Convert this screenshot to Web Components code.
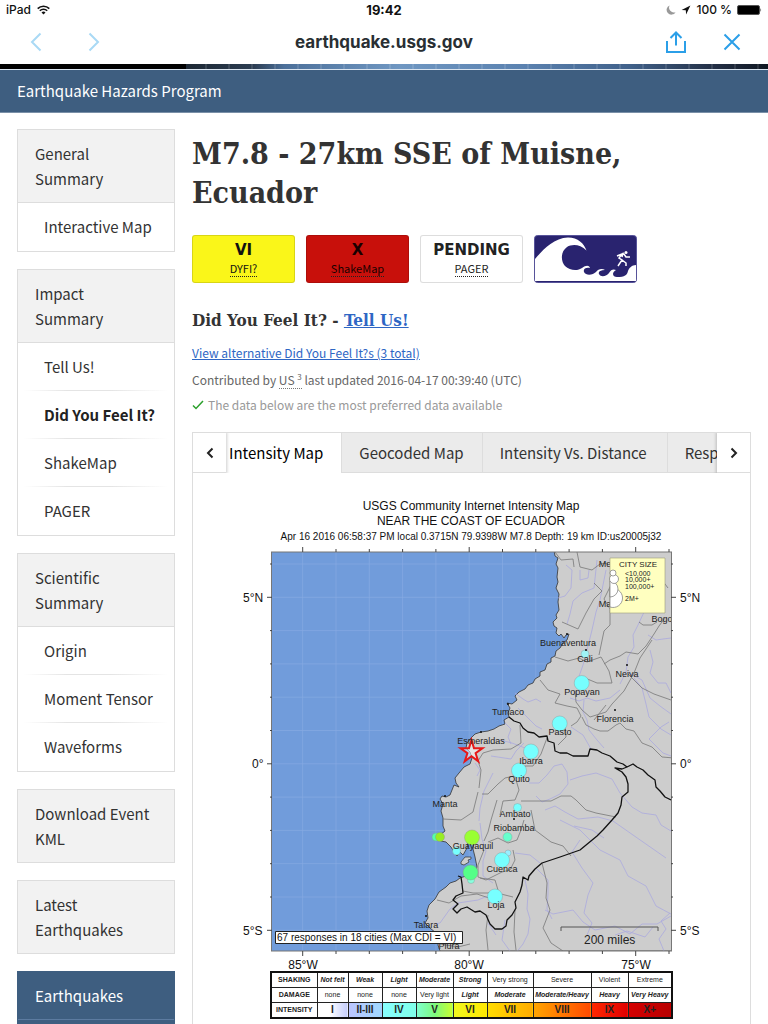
<!DOCTYPE html>
<html lang="en">
<head>
<meta charset="utf-8">
<meta name="viewport" content="width=device-width, initial-scale=1">
<title>M7.8 - 27km SSE of Muisne, Ecuador</title>
<style>
  html, body { margin: 0; height: 100%; }
  body {
    --rule: #ddd;
    --blue: #3e5e80;
    --link: #2e66c4;
    --sys: Inter, "Liberation Sans", sans-serif;
    --serif: "DejaVu Serif Condensed", "DejaVu Serif", serif;
    font-family: "Noto Sans CJK SC", "Noto Sans", sans-serif;
    color: #333;
    background: #fff;
    overflow: hidden;
  }
</style>
</head>
<body>
<app-shell>
  <status-bar slot="chrome"></status-bar>
  <browser-bar slot="chrome" address="earthquake.usgs.gov"></browser-bar>
  <site-banner>Earthquake Hazards Program</site-banner>
  <page-columns>
    <nav-group slot="side" heading="General Summary"><nav-item>Interactive Map</nav-item></nav-group>
    <nav-group slot="side" heading="Impact Summary">
      <nav-item>Tell Us!</nav-item><nav-item current>Did You Feel It?</nav-item><nav-item>ShakeMap</nav-item><nav-item>PAGER</nav-item>
    </nav-group>
    <nav-group slot="side" heading="Scientific Summary">
      <nav-item>Origin</nav-item><nav-item>Moment Tensor</nav-item><nav-item>Waveforms</nav-item>
    </nav-group>
    <nav-group slot="side" heading="Download Event KML"></nav-group>
    <nav-group slot="side" heading="Latest Earthquakes"></nav-group>
    <nav-group slot="side" heading="Earthquakes" site></nav-group>
    <event-summary></event-summary>
    <product-tabs>
      <intensity-map></intensity-map>
      <intensity-legend></intensity-legend>
    </product-tabs>
  </page-columns>
</app-shell>

<script>
const define = (name, render) => customElements.define(name, class extends HTMLElement {
  constructor() { super(); this.attachShadow({ mode: 'open' }); }
  connectedCallback() { this.shadowRoot.innerHTML = render(this); }
});

define('app-shell', () => `
  <style>
    :host { display: flex; flex-direction: column; height: 100vh; }
    .view { flex: 1; min-height: 0; overflow: auto; scrollbar-width: none; }
  </style>
  <slot name="chrome"></slot>
  <div class="view"><slot></slot></div>`);

define('status-bar', () => `
  <style>
    :host { display: grid; grid-template-columns: 1fr auto 1fr; align-items: center; height: 20px; padding: 0 6px; font: 500 12px/20px var(--sys); color: #111; }
    .l, .r { display: flex; align-items: center; gap: 6px; }
    .r { justify-content: flex-end; gap: 5px; }
    b { font-size: 13px; }
    svg { display: block; }
  </style>
  <span class="l">iPad
    <svg width="13" height="10" viewBox="0 0 13 10" fill="none" stroke="#111" stroke-width="1.6"><path d="M.7 3.6a8.2 8.2 0 0 1 11.6 0M2.8 5.8a5.2 5.2 0 0 1 7.4 0"/><path d="M6.5 9.6 4.5 7.5a2.8 2.8 0 0 1 4 0z" fill="#111" stroke="none"/></svg>
  </span>
  <b>19:42</b>
  <span class="r">
    <svg width="10" height="10" viewBox="0 0 10 10"><path d="M3.6.4a4.8 4.8 0 1 0 6 6.8A4.9 4.9 0 0 1 3.6.4z" fill="#999"/></svg>
    <svg width="10" height="10" viewBox="0 0 10 10"><path d="M9.4.6.6 5l4.2.3.3 4.2z" fill="#111"/></svg>
    <span>100 %</span>
    <svg width="25" height="10" viewBox="0 0 25 10"><rect x=".5" y=".5" width="22" height="9" rx="1.5" fill="#000" stroke="#555"/><path d="M23.5 3q1.3 2 0 4z" fill="#111"/></svg>
  </span>`);

define('browser-bar', el => `
  <style>
    :host { display: grid; grid-template-columns: 1fr auto 1fr; align-items: center; height: 44px; padding: 0 26px; }
    div { display: flex; gap: 38px; }
    .r { justify-content: flex-end; gap: 36px; }
    button { appearance: none; border: 0; background: none; padding: 0; width: 20px; height: 24px; display: grid; place-items: center; }
    strong { font: 700 17px/24px var(--sys); color: #292f33; }
    svg { fill: none; stroke: #2b9fe8; stroke-width: 2; }
    .l svg { stroke: #a9d9f5; }
  </style>
  <div class="l">
    <button aria-label="Back"><svg width="12" height="20" viewBox="0 0 12 20"><path d="M10.500 1.500 2 10l8.500 8.500"/></svg></button>
    <button aria-label="Forward"><svg width="12" height="20" viewBox="0 0 12 20"><path d="m1.500 1.500 8.500 8.500-8.500 8.500"/></svg></button>
  </div>
  <strong>${el.getAttribute('address')}</strong>
  <div class="r">
    <button aria-label="Share"><svg width="20" height="22" viewBox="0 0 20 22"><path d="M1 10v11h18V10M10 14.500V1.500M4.500 7 10 1.500 15.500 7"/></svg></button>
    <button aria-label="Close"><svg width="18" height="18" viewBox="0 0 18 18"><path d="m1.500 1.500 15 15m0-15-15 15"/></svg></button>
  </div>`);

define('site-banner', () => `
  <style>
    :host { display: block; }
    .photo { height: 5px; border-bottom: 1px solid #dbe5f0; background:
      linear-gradient(90deg, #000 0 186px, transparent 186px),
      repeating-linear-gradient(90deg, transparent 0 21px, #ffffff1c 21px 23px),
      linear-gradient(90deg, #1c2733 24%, #2c3d52 33%, #4c709a 37%, #6f97c2 52%, #5b82b0 68%, #40618a 82%, #232f45 93%, #101722); }
    a { display: block; padding: 0 17px; font-size: 15px; line-height: 42px; color: #fff; background: var(--blue); text-decoration: none; border-bottom: 1px solid #7a90a8; }
  </style>
  <div class="photo"></div>
  <a href="#program"><slot></slot></a>`);

define('page-columns', () => `
  <style>
    :host { display: grid; grid-template-columns: 158px minmax(0, 1fr); gap: 17px; padding: 16px 17px; align-items: start; }
    nav { display: grid; gap: 17px; }
  </style>
  <nav><slot name="side"></slot></nav>
  <main><slot></slot></main>`);

define('nav-group', el => `
  <style>
    :host { display: block; border: 1px solid var(--rule); font-size: 15px; line-height: 25px; }
    :host([site]) { border-color: var(--blue); background: var(--blue); min-height: 100px; }
    a { display: block; padding: 11px 22px 11px 17px; background: #f2f2f2; color: #333; text-decoration: none; }
    :host([site]) a { background: var(--blue); color: #fff; border-bottom: 1px solid #5c7ba0; }
    .items { border-top: 1px solid var(--rule); }
  </style>
  <a href="#section">${el.getAttribute('heading')}</a>
  ${el.children.length ? '<div class="items"><slot></slot></div>' : ''}`);

define('nav-item', () => `
  <style>
    :host { display: block; }
    a { display: block; padding: 11px 0 11px 26px; color: #333; text-decoration: none; white-space: nowrap; }
    :host([current]) a { font-weight: 700; color: #222; }
    i { display: block; height: 1px; margin: 0 6px; background: linear-gradient(90deg, #fff, #e4e4e4 30%, #e4e4e4 60%, #fff); }
    :host(:last-child) i { background: none; }
  </style>
  <a href="#item"><slot></slot></a><i></i>`);

define('event-badge', el => `
  <style>
    :host { display: block; }
    a { box-sizing: border-box; display: flex; flex-direction: column; align-items: center; width: 103px; height: 48px; padding-top: 4px; border: 1px solid #0002; border-radius: 3px; background: var(--fill, #fff); color: var(--ink, #222); text-decoration: none; }
    b { font: 700 15px/20px "DejaVu Sans", sans-serif; }
    abbr { font-size: 11px; line-height: 16px; border-bottom: 1px dotted #222; }
  </style>
  <a href="#badge"><b>${el.getAttribute('value')}</b><abbr>${el.getAttribute('label')}</abbr></a>`);

define('event-summary', () => `
  <style>
    :host { display: block; }
    h1 { margin: 5px 0 0; font: 700 30px/39px var(--serif); }
    .badges { display: flex; gap: 11px; margin-top: 23px; }
    .tsunami { display: block; }
    h2 { margin: 24px 0 0; font: 700 17px/26px var(--serif); }
    a { color: var(--link); }
    p { margin: 0; font-size: 12px; line-height: 25px; color: #666; }
    .alt { margin-top: 7px; }
    .by { margin-top: 2px; }
    .ok { color: #999; display: flex; align-items: center; gap: 4px; }
    abbr { border-bottom: 1px dotted #777; }
    sup { font-size: 8px; line-height: 1; }
  </style>
  <h1>M7.8 - 27km SSE of Muisne, Ecuador</h1>
  <div class="badges">
    <event-badge value="VI" label="DYFI?" style="--fill:#faf619;--ink:#111"></event-badge>
    <event-badge value="X" label="ShakeMap" style="--fill:#c8100b;--ink:#180000"></event-badge>
    <event-badge value="PENDING" label="PAGER"></event-badge>
    <a class="tsunami" href="#tsunami" aria-label="Tsunami">
      <svg width="103" height="48" viewBox="0 0 103 48" style="display:block">
        <rect x=".5" y=".5" width="102" height="47" rx="3" fill="#29236f" stroke="#57539a"/>
        <path d="M1 24C8 16 19 3 34 2.500c10 0 16 6 18.500 13C46 9 38 9 33 12c-7 5-6 15-2 19 5 5 13 5 17 2 4-3 7-3 8 0-4-1-7 1-6 4 2 4 9 3 12 0 2-3 6-4 9-2-5 0-7 2-6 4 2 4 8 2 10-1 2-4 5-4 7-3-5 3-3 7 1 7 8 0 10-2 11-6 1-3 4-6 8-6v16H1z" fill="#fff"/>
        <path d="m84 31 4-6-3-2 3-4-5 2m2-1 5-1 2 3 4 0m-8 3 4 3 0 3m-4-9 1-4" fill="none" stroke="#fff" stroke-width="1.500"/><circle cx="92" cy="17.500" r="1.500" fill="#fff"/>
      </svg>
    </a>
  </div>
  <h2>Did You Feel It? - <a href="#tell">Tell Us!</a></h2>
  <p class="alt"><a href="#alternatives">View alternative Did You Feel It?s (3 total)</a></p>
  <p class="by">Contributed by <abbr>US <sup>3</sup></abbr> last updated 2016-04-17 00:39:40 (UTC)</p>
  <p class="ok"><svg width="12" height="10" viewBox="0 0 12 10"><path d="m1 5.500 3 3L11 1" fill="none" stroke="#2ca02c" stroke-width="1.500"/></svg>The data below are the most preferred data available</p>`);

define('product-tabs', () => `
  <style>
    :host { display: block; margin-top: 15px; border: 1px solid var(--rule); }
    .bar { display: flex; height: 40px; }
    .tabs { flex: 1; min-width: 0; display: flex; overflow: hidden; }
    button { appearance: none; box-sizing: border-box; flex: none; margin: 0; border: 0; border-bottom: 1px solid var(--rule); border-left: 1px solid var(--rule); padding: 0 18px 0 17px; font: inherit; font-size: 15px; line-height: 39px; color: #333; background: #ebebeb; white-space: nowrap; }
    .tabs button:first-child { padding-left: 2px; border-color: transparent; background: #fff; color: #000; }
    .tabs button:nth-child(3) { padding-right: 20px; }
    .arrow { width: 33px; padding: 0; background: #fff; display: grid; place-items: center; border-left: 0; position: relative; box-shadow: 0 0 3px 1px #0003; clip-path: inset(0 -4px); }
    .arrow:first-child { clip-path: inset(0 -4px 0 0); }
    .arrow:last-child { clip-path: inset(0 0 0 -4px); }
    svg { fill: none; stroke: #222; stroke-width: 2; }
  </style>
  <div class="bar">
    <button class="arrow" aria-label="Previous tabs"><svg width="8" height="12" viewBox="0 0 8 12"><path d="M6.500 1.500 2 6l4.500 4.500"/></svg></button>
    <div class="tabs" role="tablist">
      <button role="tab" aria-selected="true">Intensity Map</button>
      <button role="tab">Geocoded Map</button>
      <button role="tab">Intensity Vs. Distance</button>
      <button role="tab">Responses</button>
    </div>
    <button class="arrow" aria-label="Next tabs"><svg width="8" height="12" viewBox="0 0 8 12"><path d="M1.500 1.500 6 6l-4.500 4.500"/></svg></button>
  </div>
  <slot></slot>`);

const lonTicks = Array.from({ length: 12 }, (_, i) => 302.7 + i * 33.3);
const latTicks = Array.from({ length: 12 }, (_, i) => 564 + i * 33.3);
const ticks = [
  ...lonTicks.map((x, i) => { const n = i % 5 ? 3 : 5; return `M${x} 552v-${n}M${x} 951v${n}`; }),
  ...latTicks.map((y, i) => { const n = i % 5 === 1 ? 5 : 2; return `M272 ${y}h-${n}M671 ${y}h${n}`; })
].join('');
const graticule = lonTicks.map(x => `M${x} 552V951`).join('') + latTicks.map(y => `M272 ${y}H671`).join('');
const cities = [
  ['Buenaventura', 568, 646], ['Cali', 585, 662], ['Popayan', 582, 695], ['Neiva', 627, 677], ['Florencia', 615, 722],
  ['Pasto', 560, 735], ['Tumaco', 508, 715], ['Esmeraldas', 481, 744], ['Ibarra', 531, 764], ['Quito', 519, 782],
  ['Manta', 445, 807], ['Ambato', 515, 817], ['Riobamba', 514, 831], ['Guayaquil', 473, 849], ['Cuenca', 502, 872],
  ['Loja', 496, 908], ['Talara', 426, 928], ['Piura', 449, 949], ['Me', 605, 567], ['Ma', 605, 607], ['Bogo', 662, 622]
].map(([n, x, y]) => `<text x="${x}" y="${y}">${n}</text>`).join('');
const responses = [
  [585, 654, 4, '#9ef3f5'], [581.7, 683, 7.5, '#7ff'], [559.7, 723.5, 7.5, '#7ff'], [531, 751.5, 7.5, '#7ff'], [519, 770.5, 7.5, '#7ff'],
  [517.5, 807.5, 4, '#7ff'], [507.5, 837, 4.5, '#6fc'], [472, 837.5, 7.5, '#9f3'], [436, 837, 4, '#5fa'], [440, 837, 4.5, '#9e2'],
  [456.5, 851, 4, '#7ff'], [471, 880, 3.5, '#8fd'], [508, 853, 3, '#9ef'], [470.5, 872.5, 7.5, '#5f8'], [502, 860, 7.5, '#7ff'], [495, 896.5, 7.5, '#7ff']
].map(([x, y, r, f]) => `<circle cx="${x}" cy="${y}" r="${r}" fill="${f}"/>`).join('');

define('intensity-map', () => `
  <style>
    :host { display: block; }
    svg { display: block; width: 100%; height: auto; font-family: "Liberation Sans", sans-serif; fill: #111; }
    .ttl { font-size: 12px; text-anchor: middle; }
    .city { font-size: 9px; text-anchor: middle; fill: #222; }
  </style>
  <svg viewBox="193 473 557 498" role="img">
    <defs><clipPath id="frame"><rect x="272" y="552" width="399" height="399"/></clipPath></defs>
    <g class="ttl">
      <text x="471" y="510">USGS Community Internet Intensity Map</text>
      <text x="471" y="525">NEAR THE COAST OF ECUADOR</text>
      <text x="471" y="540" style="font-size:10px">Apr 16 2016 06:58:37 PM local 0.3715N 79.9398W M7.8 Depth: 19 km ID:us20005j32</text>
    </g>
    <g clip-path="url(#frame)" fill="none" stroke-linejoin="round">
      <rect x="272" y="552" width="399" height="399" fill="#719cdb"/>
      <path d="${graticule}" stroke="#86abe2" stroke-width=".7"/>
      <path fill="#cdcdcd" stroke="#333" stroke-width=".8" d="M554 550L555 556 558 558 556 564 558 568 557 577 558 582 556 588 559 594 558 602 559 610 556 615 557 618 553 622 554 626 557 628 556 633 559 636 561 634 564 638 566 635 569 634 567 640 563 643 560 648 556 651 555 656 551 658 551 662 547 664 545 670 540 672 540 676 535 679 533 683 528 685 525 689 519 692 515 696 517 700 512 704 507 703 510 708 508 713 509 717 504 720 505 724 499 726 494 729 488 731 481 732 475 734 471 738 467 743 466 748 470 752 472 758 470 764 464 767 459 773 455 778 456 783 459 787 454 785 452 790 450 795 446 797 442 796 440 799 443 804 441 811 443 818 443 826 445 831 440 835 437 838 441 841 446 842 451 847 454 852 457 856 460 852 463 855 467 848 468 842 470 838 474 842 473 849 475 857 477 867 474 873 471 878 466 876 460 878 456 881 450 883 446 887 439 892 435 899 429 905 427 911 428 918 425 923 430 928 436 933 439 938 438 945 440 951H680V550z"/>
      <path d="M461 862l4-5 6 0 0 2-3 1 1 2-5 3-3-1z" fill="#cdcdcd" stroke="#333" stroke-width=".7"/>
      <path stroke="#abaade" stroke-width=".8" d="M566 565l6 5-1 18-6 8-7 2M580 570v10l8-2 1-8M597 560l-3 28-12 5-9 8-3 13-3 10M606 570l-6 30-4 12-4 18-5 20-4 15-7 20M645 610l-7 15-5 10 1 12-6 10-2 15-6 12M648 635l8 5 7-1 8-1M650 650l3 12-3 11 8 10h8l5 10M634 678l8 10 4 16 3 13 12 12 10 6M620 690l-10 8-14 3-9-3-8 3-9-3M584 700l-1 12 4 8 2 10 8 10 7 8M627 672l15 8 8 18 10 8 11 8M505 723l6 6-3 8 3 7M515 693l8 6 5 3 8-3 5 3M518 708l8 8 10 10 6 3M571 727l12 8 8 14M529 783l10 0 8-8 7-9 8-2 5 8 1 12-8 10-10 5-8 3-6-6M570 780l12-4 14-3 16 6 8 14 12 14 10 6 14 2 5 10 10 6M545 810l10-4 10 6 13 7 20-2 15 4 20 14 33 23M560 820l20 10 20 20 20 10 8 16 18 10 10 20 15 8M580 840l-8 12 10 16 11 15-5 12-4 18 8 10-5 12M540 863l-10-8-15-2M525 880l3 14-1 15 3 10-2 15-5 10-8 10M536 868l12 12 0 14-1 15 5 10M545 910l8 4 20-4 10 12 12 8 20-4 15 8 12-10 15 0 14-8M615 935l12-4 18 6 8-10M496 935l-8-12M505 920l-3 20 8 11M490 895l-12 5-20 3-8 6-10 14-5 1M480 823l2 16 4 12-3 10 0 15 10 7M475 763l5 7-3 6M493 773l-9 18-4 17-1 13M491 756l20 3 5-8 8-8M604 838l-12-8-18-4M664 951l-5-12 7-10-5-8 9-8M500 740l12 3 13 5M669 722l-8 5-12 12 14 14 8 3"/>
      <path stroke="#777" stroke-width=".8" d="M555 552l6 8 12-1 1 8M577 552l3 15 12 3 8-6 8-1M594 583l8 8-8 8-8 14-8 16-16-7M612 583l-8 16 6 10 0 16-6 6-5 24M555 657l13 4 11-3 8 4 14-5 8 14 3 12h-15l-12-5M604 664l6-4 10-4 6-4 12 2 8-8 8-12 5-8 6-8M639 622l4 3 9 0 5-3M652 640l-12 18-6 15-10 18-12 13-6 8-16 5-8-7-6-8-1-11M540 680l8 10 12 4-5 9 12 3 10 2 4 8-4 6-6 4M582 717l4 8 8 4 6 2 8 0 8-6 4-2 6 6 8 2 8 12 10 4 10 10 12 1 7 2M594 720l8-10 4-5M628 674l14 14 12 6 17 6M547 738l-6 16-8 12-8 0-2 8-18 4-7 6-10 10-6 0M520 725l1 18-10 6-18 1-10 3-5 8 3 9-2 18M558 745l8-8-1-10M516 780l3 10-4 10-12 1-3 14M521 801h30l10-5 10 0 5 4 10 10 10 3 20 4M478 792l-5 20-12 8-18-1M497 800l-6 20-3 12-4 9M488 842l10-4 10 5 9-3 4-10 3-10M484 850l-6 15 0 12 8 3 16-8 8-2 5-10-2-10M480 878l15 2 3 10-10 3-15 0-10-2M437 900l12 3 12-7 16-2 15 5 9-5 12 3M488 915l-2 15 2 20M515 910l-1 22 2 18M531 810l4 20 16 12 12 4 8 10M542 863l5 20-1 15 4 12-7 18 8 15 12 8M440 944l18 3 12-3M662 566l-3 10 9 12"/>
      <path stroke="#111" stroke-width="1.3" d="M509 717L514 721 520 723 523 728 528 732 534 733 539 737 547 736 548 741 554 743 555 751 560 753 567 753 573 756 588 756 590 749 597 750 602 753 610 756 617 762 623 764 627 767 633 764 637 767 643 770 648 775 655 780 656 787 660 791 665 797 671 800M627 767L622 769 615 768 622 772 626 777 628 784 628 792 622 797 621 805 618 813 612 820 603 830 597 836 580 850 560 857 542 863 535 869 529 876 528 880 523 877 522 885 520 892 515 902 516 908 512 915 507 920 506 926 502 929 495 929 490 924 486 915 480 911 475 912 467 907 461 909 457 913 453 909 458 904 453 900 456 896 463 893 462 884 461 877 458 876"/>
      <g stroke="#888" stroke-opacity=".6" stroke-width=".6">${responses}</g>
      <g fill="#111"><circle cx="567" cy="634" r="1"/><circle cx="586" cy="650" r="1"/><circle cx="627" cy="665" r="1"/><circle cx="615" cy="710" r="1"/><circle cx="508" cy="704" r="1"/><circle cx="481" cy="732" r="1"/><circle cx="445" cy="796" r="1"/><circle cx="514" cy="819" r="1"/><circle cx="426" cy="916" r="1"/></g>
      <path d="m471.500 740 2.500 8.200h8.500l-6.900 5 2.700 8.200-6.800-5.100-6.800 5.100 2.700-8.200-6.900-5h8.500z" fill="#fff" fill-opacity=".5" stroke="#e81818" stroke-width="2" stroke-linejoin="miter"/>
      <g class="city" stroke="none">${cities}</g>
      <path d="M561 931v-4h97v4" stroke="#555"/>
      <text x="584" y="944" font-size="12" fill="#222">200 miles</text>
      <rect x="275.500" y="931.500" width="187" height="12" fill="#fff" stroke="#222"/>
      <text x="277" y="941" font-size="10" fill="#111">67 responses in 18 cities (Max CDI = VI)</text>
      <rect x="610" y="558" width="55" height="55" fill="#ffffc0" stroke="#9b9b78" stroke-width=".6"/>
      <g fill="#fff" stroke="#777" stroke-width=".7"><path d="M610 589a9.500 9.500 0 1 1 0 18z"/><path d="M610 581a7 7 0 0 1 0 16z"/><circle cx="614" cy="579" r="4.500"/><circle cx="613" cy="573" r="3"/></g>
      <g fill="#222"><text x="619" y="567" font-size="8">CITY SIZE</text><g font-size="7"><text x="625" y="576">&lt;10,000</text><text x="625" y="582">10,000+</text><text x="625" y="589">100,000+</text><text x="625" y="601">2M+</text></g></g>
    </g>
    <rect x="271.500" y="552" width="400" height="399" fill="none" stroke="#777"/>
    <path d="${ticks}" stroke="#444"/>
    <g font-size="12">
      <text x="243" y="602">5°N</text><text x="252" y="768">0°</text><text x="243" y="935">5°S</text>
      <text x="680" y="602">5°N</text><text x="680" y="768">0°</text><text x="680" y="935">5°S</text>
      <g text-anchor="middle"><text x="303" y="969">85°W</text><text x="469" y="969">80°W</text><text x="636" y="969">75°W</text></g>
    </g>
  </svg>`);

const levels = [
  ['Not felt', 'none', 'I', 31, '#fff,#fff 40%,#c5cdfb', 1, 0], ['Weak', 'none', 'II-III', 34, '#bcc5ff,#a0d8ff', 1, 0], ['Light', 'none', 'IV', 34, '#8ff,#7fffe8', 1, 0],
  ['Moderate', 'Very light', 'V', 37, '#7fffd0,#7df97f 50%,#c8ff30', 1, 0], ['Strong', 'Light', 'VI', 34, '#eff820,#ffe800', 1, 1], ['Very strong', 'Moderate', 'VII', 46, '#ffdc00,#ffac00', 0, 1],
  ['Severe', 'Moderate/Heavy', 'VIII', 58, '#ffa500,#ff4a00', 0, 1], ['Violent', 'Heavy', 'IX', 37, '#ff2800,#e00000', 0, 1], ['Extreme', 'Very Heavy', 'X+', 44, '#d40000,#b80000', 0, 1]
];
define('intensity-legend', () => `
  <style>
    :host { display: block; padding-bottom: 30px; }
    table { width: 72%; margin: 0 auto; table-layout: fixed; border-collapse: collapse; border: 2px solid #111; font: 7px/14px "Liberation Sans", sans-serif; color: #222; text-align: center; }
    th, td { padding: 0; border: 1px solid #222; white-space: nowrap; }
    .s { font-weight: 700; font-style: italic; }
    .n { font-weight: 700; font-size: 10px; background: linear-gradient(90deg, var(--g)); }
  </style>
  <table>
    <colgroup><col style="width:46px">${levels.map(l => `<col style="width:${l[3]}px">`).join('')}</colgroup>
    <tr><th scope="row">SHAKING</th>${levels.map(l => `<td class="${l[5] ? 's' : ''}">${l[0]}</td>`).join('')}</tr>
    <tr><th scope="row">DAMAGE</th>${levels.map(l => `<td class="${l[6] ? 's' : ''}">${l[1]}</td>`).join('')}</tr>
    <tr><th scope="row">INTENSITY</th>${levels.map(l => `<td class="n" style="--g:${l[4]}">${l[2]}</td>`).join('')}</tr>
  </table>`);
</script>
</body>
</html>
